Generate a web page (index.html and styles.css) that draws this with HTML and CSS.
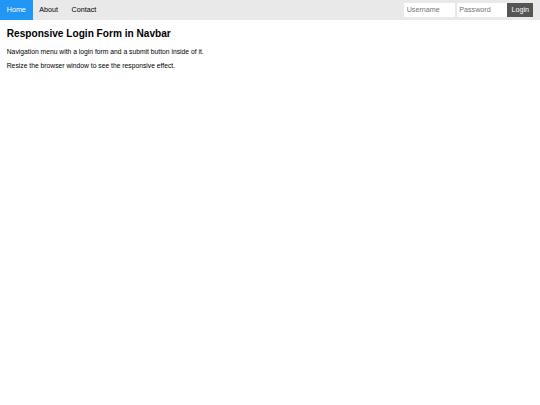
FILE: index.html
```html
<!DOCTYPE html>
<html lang="en">
<head>
<meta charset="utf-8">
<title>Responsive Login Form in Navbar</title>
<link rel="stylesheet" href="styles.css">
</head>
<body>
<div class="topnav">
  <nav class="links">
    <a class="active" href="#home">Home</a>
    <a href="#about">About</a>
    <a href="#contact">Contact</a>
  </nav>
  <form class="login-container">
    <input type="text" placeholder="Username" name="username">
    <input type="text" placeholder="Password" name="psw">
    <button type="submit">Login</button>
  </form>
</div>
<div class="content">
  <h2>Responsive Login Form in Navbar</h2>
  <p>Navigation menu with a login form and a submit button inside of it.</p>
  <p>Resize the browser window to see the responsive effect.</p>
</div>
</body>
</html>
```
FILE: styles.css
```css
* { box-sizing: border-box; }

body {
  margin: 0;
  font-family: "Liberation Sans", Arial, sans-serif;
  background: #fff;
  color: #000;
}

.topnav {
  display: flex;
  justify-content: space-between;
  align-items: flex-start;
  background-color: #e9e9e9;
  height: 20px;
}

.links {
  display: flex;
}

.links a {
  display: block;
  color: #000;
  text-decoration: none;
  font-size: 7.17px;
  line-height: 20px;
  padding: 0 6.75px;
}

.links a.active {
  background-color: #2196F3;
  color: #fff;
}

.login-container {
  display: flex;
  gap: 2px;
  margin: 3.4px 6.75px 0 0;
}

.login-container input {
  width: 50.6px;
  height: 13.3px;
  padding: 0 2.5px;
  border: none;
  border-radius: 0;
  outline: none;
  font-family: inherit;
  font-size: 7.17px;
  background: #fff;
  color: #000;
}

.login-container input::placeholder {
  color: #757575;
}

.login-container button {
  margin-left: -2px;
  height: 13.3px;
  padding: 0 4.2px;
  border: none;
  border-radius: 0;
  background-color: #555;
  color: #fff;
  font-family: inherit;
  font-size: 7.17px;
}

.content {
  padding-left: 6.75px;
}

.content h2 {
  font-size: 10.125px;
  font-weight: bold;
  margin: 8.4px 0;
}

.content p {
  font-size: 6.75px;
  margin: 6.75px 0;
}
```
